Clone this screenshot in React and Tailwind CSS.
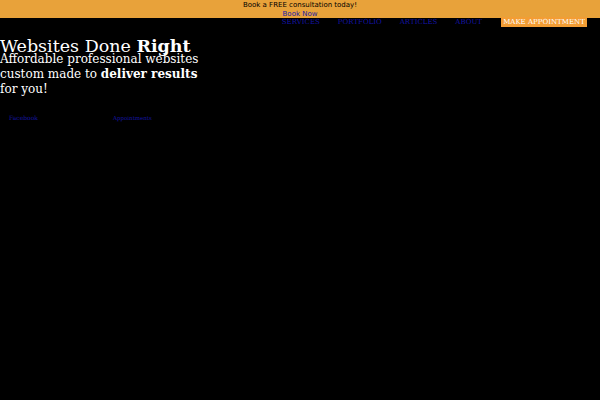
export default function App() {
  return (
    <div className="w-[600px] h-[400px] bg-black overflow-hidden relative" style={{ fontFamily: '"DejaVu Serif", serif' }}>
      <div className="bg-[#e8a23a] h-[18px] flex flex-col items-center text-[7px] leading-[9px] pt-[1px]" style={{ fontFamily: '"DejaVu Sans", sans-serif' }}>
        <div className="text-black">Book a FREE consultation today!</div>
        <a className="text-[#1a1aa6]">Book Now</a>
      </div>
      <div className="flex justify-end items-start h-[10px] pr-[13px]">
        <nav className="flex items-center gap-[18px] text-[7px] uppercase text-[#1414a4] leading-[9px]">
          <a>Services</a>
          <a>Portfolio</a>
          <a>Articles</a>
          <a>About</a>
        </nav>
        <button className="ml-[19px] -mt-[1px] bg-[#f39d34] text-white text-[7px] uppercase w-[86px] h-[10px] leading-[10px]">Make Appointment</button>
      </div>
      <div className="mt-[8px] text-white">
        <h1 className="text-[17.5px] leading-[20px] mb-[-4px]">Websites Done <b>Right</b></h1>
        <p className="text-[12px] leading-[15px] w-[205px]">Affordable professional websites custom made to <b>deliver results</b> for you!</p>
      </div>
      <div className="flex mt-[17px] text-[6px] leading-[8px] text-[#1414a4] pl-[9px]">
        <a className="w-[104px]">Facebook</a>
        <a className="text-[5.5px]">Appointments</a>
      </div>
    </div>
  );
}
